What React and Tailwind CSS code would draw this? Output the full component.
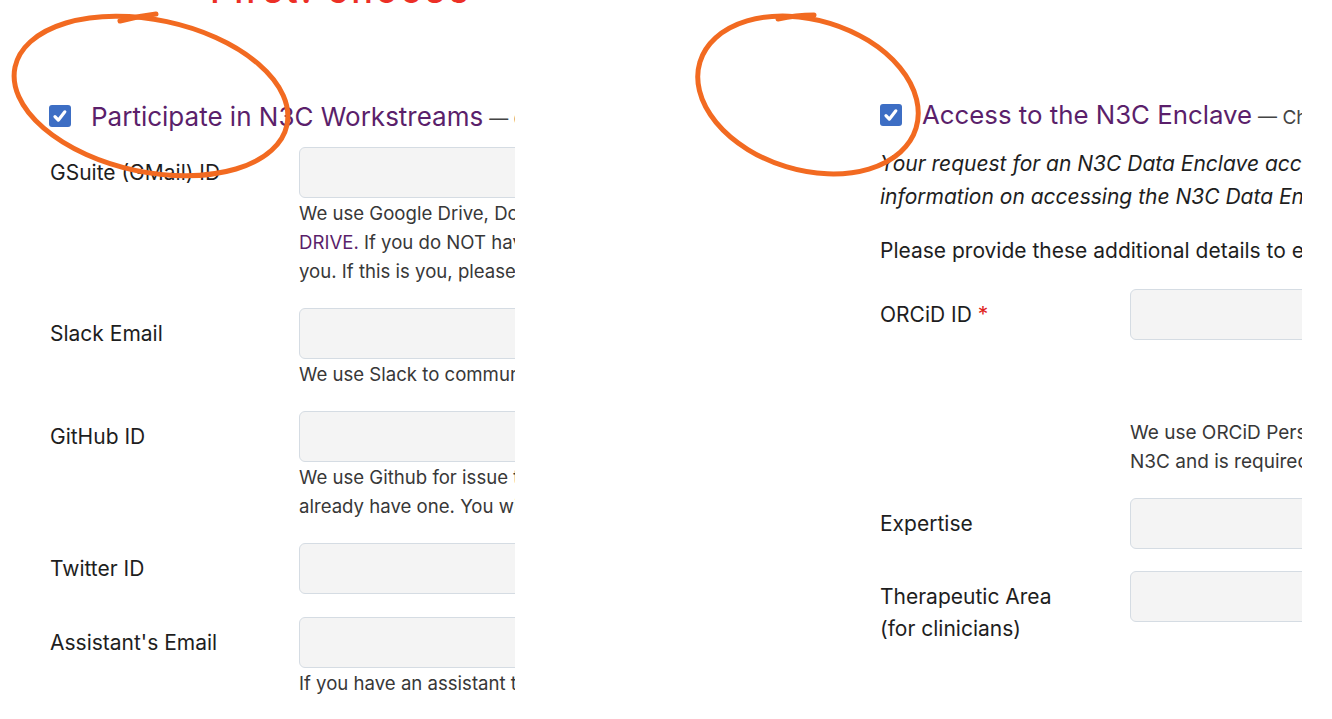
import React from 'react'

const purple = 'text-[#5b1f6b]'

function Check() {
  return (
    <span className="w-[22px] h-[22px] rounded-[3px] bg-[#3d6ec4] flex items-center justify-center shrink-0">
      <svg viewBox="0 0 16 16" className="w-[18px] h-[18px]" fill="none" stroke="white" strokeWidth="2.8" strokeLinecap="round" strokeLinejoin="round">
        <path d="M3.5 8.5l3 3.2 5.8-7.4" />
      </svg>
    </span>
  )
}

function Field({ label, help, labelW = 'w-[249px]', inputW = 'w-[400px]', helpMt = 'mt-[1px]', helpSize = 'text-[18.6px]' }) {
  return (
    <div className="flex">
      <div className={`${labelW} shrink-0 pt-[10px] text-[21px] leading-[32px] text-[#1e1e1e]`}>{label}</div>
      <div className="flex flex-col min-w-0">
        <div className={`${inputW} h-[51px] shrink-0 rounded-md border border-[#d5dce3] bg-[#f4f4f4]`} />
        {help && (
          <div className={`${helpMt} ${helpSize} leading-[29px] text-[#383838] whitespace-nowrap`}>
            {help.map((line, i) => (
              <div key={i}>{line}</div>
            ))}
          </div>
        )}
      </div>
    </div>
  )
}

export default function App() {
  return (
    <div className="relative w-[1332px] h-[719px] bg-white overflow-hidden flex font-['Inter',sans-serif]">
      {/* Left screenshot */}
      <div className="w-[515px] shrink-0 overflow-hidden">
        <div className="h-[13px] overflow-hidden pl-[210px]">
          <div className="-mt-[28px] text-[36px] leading-none font-medium text-[#ec2f26] whitespace-nowrap tracking-[3px]">First: choose</div>
        </div>

        <div className="pl-[49px] mt-[86px] flex items-center gap-[20px] h-[34px] whitespace-nowrap">
          <Check />
          <div className="flex items-baseline">
            <span className={`text-[26px] ${purple}`}>Participate in N3C Workstreams</span>
            <span className="text-[19px] text-[#444] ml-[6px]">— Check this box to join</span>
          </div>
        </div>

        <div className="pl-[50px] mt-[14px] flex flex-col gap-[22px]">
          <Field
            label="GSuite (GMail) ID"
            help={[
              'We use Google Drive, Docs and Sheets for sharing. This will give you access to the SHARED',
              <span key="d"><span className={purple}>DRIVE.</span> If you do NOT have a GSuite ID we will share files by email with</span>,
              'you. If this is you, please leave this field blank.',
            ]}
          />
          <Field label="Slack Email" help={['We use Slack to communicate across workstreams.']} />
          <Field
            label="GitHub ID"
            help={[
              'We use Github for issue tracking and code. Please create an account if you do not',
              'already have one. You will be added to the N3C organization.',
            ]}
          />
          <div className="mb-[1px]">
            <Field label="Twitter ID" />
          </div>
          <Field label="Assistant's Email" help={['If you have an assistant that helps with scheduling, add them here.']} />
        </div>
      </div>

      {/* Right screenshot */}
      <div className="ml-[335px] w-[452px] shrink-0 overflow-hidden pl-[30px]">
        <div className="mt-[98px] flex items-center gap-[20px] h-[34px] whitespace-nowrap">
          <Check />
          <div className="flex items-baseline">
            <span className={`text-[25.8px] ${purple}`}>Access to the N3C Enclave</span>
            <span className="text-[19px] text-[#444] ml-[6px]">— Check this box to request access</span>
          </div>
        </div>

        <div className="mt-[15px] italic text-[21px] leading-[33px] text-[#1e1e1e] whitespace-nowrap">
          <div>Your request for an N3C Data Enclave account will be reviewed. For more</div>
          <div>information on accessing the N3C Data Enclave, see the documentation.</div>
        </div>

        <div className="mt-[22px] text-[21px] leading-[32px] text-[#1e1e1e] whitespace-nowrap">
          Please provide these additional details to enable your account.
        </div>

        <div className="mt-[22px] flex flex-col gap-[22px]">
          <Field
            label={<span>ORCiD ID <span className="text-[#e0211b]">*</span></span>}
            labelW="w-[250px]"
            inputW="w-[180px]"
            helpMt="mt-[78px]"
            helpSize="text-[19px]"
            help={['We use ORCiD Persistent Identifiers to track your work in', 'N3C and is required for Enclave access.']}
          />
          <Field label="Expertise" labelW="w-[250px]" inputW="w-[180px]" />
          <Field
            label={<span>Therapeutic Area<br />(for clinicians)</span>}
            labelW="w-[250px]"
            inputW="w-[180px]"
          />
        </div>
      </div>

      {/* hand-drawn annotations */}
      <svg className="absolute inset-0 pointer-events-none" width="1332" height="719" viewBox="0 0 1332 719" fill="none" stroke="#f26a21" strokeWidth="5" strokeLinecap="round">
        <ellipse cx="151" cy="96" rx="139" ry="76" transform="rotate(12 151 96)" />
        <path d="M120 21 Q138 16 156 14" />
        <ellipse cx="808" cy="95" rx="113" ry="75" transform="rotate(17 808 95)" />
        <path d="M778 19 Q796 15 814 15" />
      </svg>
    </div>
  )
}
